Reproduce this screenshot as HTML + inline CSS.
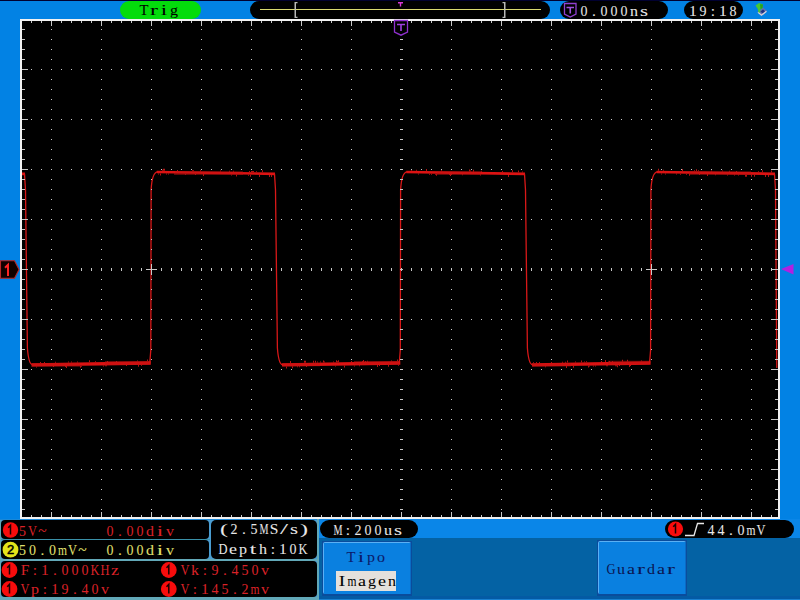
<!DOCTYPE html>
<html><head><meta charset="utf-8"><style>
html,body{margin:0;padding:0;background:#0282e4;}
body{width:800px;height:600px;position:relative;overflow:hidden;}
svg{position:absolute;left:0;top:0;font-family:"Liberation Mono";}
</style></head><body>
<svg width="800" height="600" viewBox="0 0 800 600">
<rect x="0" y="0" width="800" height="600" fill="#0282e4"/>
<rect x="0" y="0" width="800" height="1" fill="#000030"/><rect x="120" y="1" width="81" height="18" rx="9" fill="#04dc0c"/><g fill="#000" stroke="#000" stroke-width="0.05" font-size="15.5" font-family="Liberation Serif" ><text x="139.50" y="15" textLength="9.00" lengthAdjust="spacingAndGlyphs">T</text><text x="150.00" y="15" textLength="8.00" lengthAdjust="spacingAndGlyphs">r</text><text x="160.80" y="15" textLength="6.40" lengthAdjust="spacingAndGlyphs">i</text><text x="170.00" y="15" textLength="8.00" lengthAdjust="spacingAndGlyphs">g</text></g><rect x="250" y="1" width="300" height="18" rx="9" fill="#000"/><rect x="260" y="9" width="281" height="1" fill="#d8d870"/><path d="M294.5 2h3v1.2h-1.5v13.6h1.5v1.2h-3zM505.5 2h-3v1.2h1.5v13.6h-1.5v1.2h3z" fill="#b8b8b8"/><path d="M398 2h5v1.4h-1.8v3h-1.4v-3h-1.8z" fill="#d838d8"/><rect x="560" y="1" width="108" height="18" rx="9" fill="#000"/><path d="M564.5 3.5H576V14L570.25 17L564.5 14Z" stroke="#9040d0" stroke-width="1.3" fill="#000"/><path d="M566.5 7.5H574M570.25 7.5V13.5" stroke="#a050e0" stroke-width="1.6" fill="none"/><g fill="#e8e8e8" stroke="#e8e8e8" stroke-width="0.05" font-size="15.5" font-family="Liberation Serif" ><text x="580.50" y="16" textLength="7.00" lengthAdjust="spacingAndGlyphs">0</text><text x="592.06" y="16">.</text><text x="600.50" y="16" textLength="7.00" lengthAdjust="spacingAndGlyphs">0</text><text x="610.50" y="16" textLength="7.00" lengthAdjust="spacingAndGlyphs">0</text><text x="620.50" y="16" textLength="7.00" lengthAdjust="spacingAndGlyphs">0</text><text x="630.00" y="16" textLength="8.00" lengthAdjust="spacingAndGlyphs">n</text><text x="640.00" y="16" textLength="8.00" lengthAdjust="spacingAndGlyphs">s</text></g><rect x="684" y="1" width="59" height="18" rx="9" fill="#000"/><g fill="#e8e8e8" stroke="#e8e8e8" stroke-width="0.05" font-size="15.5" font-family="Liberation Serif" ><text x="689.12" y="16" textLength="7.75" lengthAdjust="spacingAndGlyphs">1</text><text x="699.50" y="16" textLength="7.00" lengthAdjust="spacingAndGlyphs">9</text><text x="710.85" y="16">:</text><text x="719.12" y="16" textLength="7.75" lengthAdjust="spacingAndGlyphs">1</text><text x="729.50" y="16" textLength="7.00" lengthAdjust="spacingAndGlyphs">8</text></g><path d="M757.5 12L763 7.5L767 11L761.5 15.5Z" fill="#6070b0"/><path d="M758 12.2L761.5 15.2L766.5 11.2" stroke="#d8d0d8" stroke-width="1.4" fill="none"/><path d="M760.5 11.5L763 9.5L765 11.2L762.5 13.2Z" fill="#203080"/><path d="M755.5 5.5L759 3L763 4.5L762.5 8L760.5 9L760 12.5L758.5 12.5L757.8 9Z" fill="#48c830"/><path d="M760 4.2L763 4.5L762.5 8L760.5 9Z" fill="#28a020"/>
<g shape-rendering="crispEdges">
<rect x="20" y="19" width="760" height="500" fill="#f2f2f2"/>
<rect x="22" y="21" width="756" height="496" fill="#000"/>
</g>
<path d="M24.5,173.8 L25.5,190 L27.4,348 Q28.6,364.2 32.5,364.8 M274.5,173.8 L275.5,190 L277.4,348 Q278.6,364.2 282.5,364.8 M524.5,173.8 L525.5,190 L527.4,348 Q528.6,364.2 532.5,364.8 M774.5,173.8 L775.5,190 L776.8,368 M149.8,362.8 L150.8,350 L151.10000000000002,190 Q152.0,172 157.8,171.8 M399.3,362.8 L400.3,350 L400.6,190 Q401.5,172 407.3,171.8 M649.6,362.8 L650.6,350 L650.9,190 Q651.8000000000001,172 657.6,171.8" stroke="#d81818" stroke-width="1.3" fill="none" stroke-linejoin="round"/>
<path d="M22,173.8 L25,173.8 M156.8,172 L275,173.8 M406.3,172 L525,173.8 M656.6,172 L775,173.8" stroke="#dc1212" stroke-width="2.7" fill="none"/>
<path d="M32,364.8 L150.8,363 M282,364.8 L400.3,363 M532,364.8 L650.6,363" stroke="#dc1212" stroke-width="3.3" fill="none"/>
<path d="M175,171.2 H243 V175 H175Z M437,171.2 H481 V175 H437Z M689,171.2 H751 V175 H689Z M31,363 H80 V366.7 H31Z M105,361 H150 V365 H105Z M283,363 H320 V366.3 H283Z M354,361 H399.5 V364.6 H354Z M532,363.5 H571 V366.5 H532Z M608,360.8 H649.5 V364.6 H608Z" fill="#c01010" opacity="0.5"/>
<path d="M158,173.4h1v1h-1zM160,173.4h1v2h-1zM162,169.7h1v1h-1zM163,168.7h1v2h-1zM164,168.7h1v2h-1zM166,173.5h1v1h-1zM168,173.5h1v1h-1zM174,173.6h1v1h-1zM177,169.9h1v1h-1zM185,173.8h1v1h-1zM192,170.2h1v1h-1zM193,170.2h1v1h-1zM195,173.9h1v1h-1zM200,170.3h1v1h-1zM203,174.1h1v2h-1zM220,170.6h1v1h-1zM229,170.8h1v1h-1zM231,174.5h1v1h-1zM233,170.8h1v1h-1zM236,174.6h1v2h-1zM248,174.7h1v1h-1zM249,171.1h1v1h-1zM250,174.8h1v2h-1zM251,171.1h1v1h-1zM252,171.1h1v1h-1zM253,171.1h1v1h-1zM256,171.2h1v1h-1zM259,174.9h1v2h-1zM262,170.3h1v2h-1zM269,175.1h1v2h-1zM271,175.1h1v2h-1zM411,169.7h1v1h-1zM416,169.8h1v1h-1zM418,173.5h1v1h-1zM426,168.9h1v2h-1zM429,173.7h1v1h-1zM431,173.7h1v1h-1zM435,173.8h1v1h-1zM436,173.8h1v2h-1zM441,170.2h1v1h-1zM449,174.0h1v1h-1zM450,174.0h1v2h-1zM451,174.0h1v1h-1zM462,174.2h1v1h-1zM469,169.6h1v2h-1zM470,170.6h1v1h-1zM473,169.7h1v2h-1zM480,174.5h1v1h-1zM481,170.8h1v1h-1zM502,171.1h1v1h-1zM508,174.9h1v2h-1zM512,170.3h1v2h-1zM518,170.4h1v2h-1zM522,171.4h1v1h-1zM658,168.7h1v2h-1zM661,173.4h1v1h-1zM663,169.7h1v1h-1zM665,173.5h1v1h-1zM676,173.6h1v1h-1zM680,173.7h1v1h-1zM682,169.0h1v2h-1zM686,173.8h1v1h-1zM689,173.8h1v2h-1zM694,170.2h1v1h-1zM696,169.2h1v2h-1zM698,170.3h1v1h-1zM699,174.0h1v1h-1zM707,174.1h1v2h-1zM711,170.5h1v1h-1zM715,174.2h1v1h-1zM722,170.6h1v1h-1zM727,174.4h1v1h-1zM729,170.8h1v1h-1zM734,174.5h1v1h-1zM736,170.9h1v1h-1zM738,174.6h1v1h-1zM745,174.7h1v2h-1zM746,174.7h1v2h-1zM751,174.8h1v2h-1zM754,174.8h1v2h-1zM758,171.2h1v1h-1zM762,170.3h1v2h-1zM765,175.0h1v2h-1zM768,175.1h1v2h-1zM771,170.4h1v2h-1zM36,366.4h1v1h-1zM40,362.0h1v1h-1zM44,362.0h1v1h-1zM53,366.1h1v1h-1zM55,361.8h1v1h-1zM65,366.0h1v1h-1zM66,365.9h1v2h-1zM68,361.6h1v1h-1zM71,361.6h1v1h-1zM77,361.5h1v1h-1zM80,365.7h1v2h-1zM81,365.7h1v1h-1zM89,360.3h1v2h-1zM95,361.2h1v1h-1zM103,365.4h1v1h-1zM105,365.3h1v1h-1zM106,365.3h1v1h-1zM107,361.0h1v1h-1zM116,360.9h1v1h-1zM126,365.0h1v1h-1zM137,360.5h1v1h-1zM138,364.8h1v2h-1zM141,364.8h1v1h-1zM147,359.4h1v2h-1zM286,366.4h1v2h-1zM290,361.0h1v2h-1zM292,366.3h1v2h-1zM297,366.2h1v1h-1zM299,366.2h1v1h-1zM304,360.8h1v2h-1zM305,360.8h1v2h-1zM306,366.1h1v1h-1zM313,360.7h1v2h-1zM315,360.7h1v2h-1zM317,361.6h1v1h-1zM320,361.6h1v1h-1zM323,360.5h1v2h-1zM324,361.5h1v1h-1zM333,361.4h1v1h-1zM335,365.6h1v1h-1zM336,360.3h1v2h-1zM337,361.3h1v1h-1zM338,360.3h1v2h-1zM344,365.5h1v2h-1zM351,361.1h1v1h-1zM354,365.4h1v1h-1zM359,365.3h1v1h-1zM362,360.9h1v1h-1zM363,359.9h1v2h-1zM365,360.9h1v1h-1zM367,360.8h1v1h-1zM377,365.0h1v2h-1zM379,365.0h1v1h-1zM388,364.8h1v2h-1zM391,360.5h1v1h-1zM397,359.4h1v2h-1zM398,364.7h1v1h-1zM533,362.2h1v1h-1zM536,362.1h1v1h-1zM539,362.1h1v1h-1zM545,366.3h1v1h-1zM551,361.9h1v1h-1zM562,361.7h1v1h-1zM565,361.7h1v1h-1zM566,365.9h1v2h-1zM567,360.6h1v2h-1zM573,365.8h1v2h-1zM575,361.5h1v1h-1zM581,360.4h1v2h-1zM584,361.4h1v1h-1zM586,361.3h1v1h-1zM588,365.6h1v2h-1zM589,365.6h1v1h-1zM593,365.5h1v1h-1zM595,365.5h1v1h-1zM601,361.1h1v1h-1zM605,360.0h1v2h-1zM606,365.3h1v1h-1zM607,365.3h1v1h-1zM609,361.0h1v1h-1zM612,360.9h1v1h-1zM615,365.2h1v1h-1zM616,365.2h1v1h-1zM617,365.2h1v2h-1zM619,365.1h1v1h-1zM622,359.8h1v2h-1zM627,359.7h1v2h-1zM629,365.0h1v2h-1zM630,365.0h1v1h-1zM641,360.5h1v1h-1z" fill="#b01414"/>
<path d="M51 29h1v1h-1zM51 39h1v1h-1zM51 49h1v1h-1zM51 59h1v1h-1zM51 69h1v1h-1zM51 79h1v1h-1zM51 89h1v1h-1zM51 99h1v1h-1zM51 109h1v1h-1zM51 119h1v1h-1zM51 129h1v1h-1zM51 139h1v1h-1zM51 149h1v1h-1zM51 159h1v1h-1zM51 169h1v1h-1zM51 179h1v1h-1zM51 189h1v1h-1zM51 199h1v1h-1zM51 209h1v1h-1zM51 219h1v1h-1zM51 229h1v1h-1zM51 239h1v1h-1zM51 249h1v1h-1zM51 259h1v1h-1zM51 279h1v1h-1zM51 289h1v1h-1zM51 299h1v1h-1zM51 309h1v1h-1zM51 319h1v1h-1zM51 329h1v1h-1zM51 339h1v1h-1zM51 349h1v1h-1zM51 359h1v1h-1zM51 369h1v1h-1zM51 379h1v1h-1zM51 389h1v1h-1zM51 399h1v1h-1zM51 409h1v1h-1zM51 419h1v1h-1zM51 429h1v1h-1zM51 439h1v1h-1zM51 449h1v1h-1zM51 459h1v1h-1zM51 469h1v1h-1zM51 479h1v1h-1zM51 489h1v1h-1zM51 499h1v1h-1zM51 509h1v1h-1zM101 29h1v1h-1zM101 39h1v1h-1zM101 49h1v1h-1zM101 59h1v1h-1zM101 69h1v1h-1zM101 79h1v1h-1zM101 89h1v1h-1zM101 99h1v1h-1zM101 109h1v1h-1zM101 119h1v1h-1zM101 129h1v1h-1zM101 139h1v1h-1zM101 149h1v1h-1zM101 159h1v1h-1zM101 169h1v1h-1zM101 179h1v1h-1zM101 189h1v1h-1zM101 199h1v1h-1zM101 209h1v1h-1zM101 219h1v1h-1zM101 229h1v1h-1zM101 239h1v1h-1zM101 249h1v1h-1zM101 259h1v1h-1zM101 279h1v1h-1zM101 289h1v1h-1zM101 299h1v1h-1zM101 309h1v1h-1zM101 319h1v1h-1zM101 329h1v1h-1zM101 339h1v1h-1zM101 349h1v1h-1zM101 359h1v1h-1zM101 369h1v1h-1zM101 379h1v1h-1zM101 389h1v1h-1zM101 399h1v1h-1zM101 409h1v1h-1zM101 419h1v1h-1zM101 429h1v1h-1zM101 439h1v1h-1zM101 449h1v1h-1zM101 459h1v1h-1zM101 469h1v1h-1zM101 479h1v1h-1zM101 489h1v1h-1zM101 499h1v1h-1zM101 509h1v1h-1zM151 29h1v1h-1zM151 39h1v1h-1zM151 49h1v1h-1zM151 59h1v1h-1zM151 69h1v1h-1zM151 79h1v1h-1zM151 89h1v1h-1zM151 99h1v1h-1zM151 109h1v1h-1zM151 119h1v1h-1zM151 129h1v1h-1zM151 139h1v1h-1zM151 149h1v1h-1zM151 159h1v1h-1zM151 169h1v1h-1zM151 179h1v1h-1zM151 189h1v1h-1zM151 199h1v1h-1zM151 209h1v1h-1zM151 219h1v1h-1zM151 229h1v1h-1zM151 239h1v1h-1zM151 249h1v1h-1zM151 259h1v1h-1zM151 279h1v1h-1zM151 289h1v1h-1zM151 299h1v1h-1zM151 309h1v1h-1zM151 319h1v1h-1zM151 329h1v1h-1zM151 339h1v1h-1zM151 349h1v1h-1zM151 359h1v1h-1zM151 369h1v1h-1zM151 379h1v1h-1zM151 389h1v1h-1zM151 399h1v1h-1zM151 409h1v1h-1zM151 419h1v1h-1zM151 429h1v1h-1zM151 439h1v1h-1zM151 449h1v1h-1zM151 459h1v1h-1zM151 469h1v1h-1zM151 479h1v1h-1zM151 489h1v1h-1zM151 499h1v1h-1zM151 509h1v1h-1zM201 29h1v1h-1zM201 39h1v1h-1zM201 49h1v1h-1zM201 59h1v1h-1zM201 69h1v1h-1zM201 79h1v1h-1zM201 89h1v1h-1zM201 99h1v1h-1zM201 109h1v1h-1zM201 119h1v1h-1zM201 129h1v1h-1zM201 139h1v1h-1zM201 149h1v1h-1zM201 159h1v1h-1zM201 169h1v1h-1zM201 179h1v1h-1zM201 189h1v1h-1zM201 199h1v1h-1zM201 209h1v1h-1zM201 219h1v1h-1zM201 229h1v1h-1zM201 239h1v1h-1zM201 249h1v1h-1zM201 259h1v1h-1zM201 279h1v1h-1zM201 289h1v1h-1zM201 299h1v1h-1zM201 309h1v1h-1zM201 319h1v1h-1zM201 329h1v1h-1zM201 339h1v1h-1zM201 349h1v1h-1zM201 359h1v1h-1zM201 369h1v1h-1zM201 379h1v1h-1zM201 389h1v1h-1zM201 399h1v1h-1zM201 409h1v1h-1zM201 419h1v1h-1zM201 429h1v1h-1zM201 439h1v1h-1zM201 449h1v1h-1zM201 459h1v1h-1zM201 469h1v1h-1zM201 479h1v1h-1zM201 489h1v1h-1zM201 499h1v1h-1zM201 509h1v1h-1zM251 29h1v1h-1zM251 39h1v1h-1zM251 49h1v1h-1zM251 59h1v1h-1zM251 69h1v1h-1zM251 79h1v1h-1zM251 89h1v1h-1zM251 99h1v1h-1zM251 109h1v1h-1zM251 119h1v1h-1zM251 129h1v1h-1zM251 139h1v1h-1zM251 149h1v1h-1zM251 159h1v1h-1zM251 169h1v1h-1zM251 179h1v1h-1zM251 189h1v1h-1zM251 199h1v1h-1zM251 209h1v1h-1zM251 219h1v1h-1zM251 229h1v1h-1zM251 239h1v1h-1zM251 249h1v1h-1zM251 259h1v1h-1zM251 279h1v1h-1zM251 289h1v1h-1zM251 299h1v1h-1zM251 309h1v1h-1zM251 319h1v1h-1zM251 329h1v1h-1zM251 339h1v1h-1zM251 349h1v1h-1zM251 359h1v1h-1zM251 369h1v1h-1zM251 379h1v1h-1zM251 389h1v1h-1zM251 399h1v1h-1zM251 409h1v1h-1zM251 419h1v1h-1zM251 429h1v1h-1zM251 439h1v1h-1zM251 449h1v1h-1zM251 459h1v1h-1zM251 469h1v1h-1zM251 479h1v1h-1zM251 489h1v1h-1zM251 499h1v1h-1zM251 509h1v1h-1zM301 29h1v1h-1zM301 39h1v1h-1zM301 49h1v1h-1zM301 59h1v1h-1zM301 69h1v1h-1zM301 79h1v1h-1zM301 89h1v1h-1zM301 99h1v1h-1zM301 109h1v1h-1zM301 119h1v1h-1zM301 129h1v1h-1zM301 139h1v1h-1zM301 149h1v1h-1zM301 159h1v1h-1zM301 169h1v1h-1zM301 179h1v1h-1zM301 189h1v1h-1zM301 199h1v1h-1zM301 209h1v1h-1zM301 219h1v1h-1zM301 229h1v1h-1zM301 239h1v1h-1zM301 249h1v1h-1zM301 259h1v1h-1zM301 279h1v1h-1zM301 289h1v1h-1zM301 299h1v1h-1zM301 309h1v1h-1zM301 319h1v1h-1zM301 329h1v1h-1zM301 339h1v1h-1zM301 349h1v1h-1zM301 359h1v1h-1zM301 369h1v1h-1zM301 379h1v1h-1zM301 389h1v1h-1zM301 399h1v1h-1zM301 409h1v1h-1zM301 419h1v1h-1zM301 429h1v1h-1zM301 439h1v1h-1zM301 449h1v1h-1zM301 459h1v1h-1zM301 469h1v1h-1zM301 479h1v1h-1zM301 489h1v1h-1zM301 499h1v1h-1zM301 509h1v1h-1zM351 29h1v1h-1zM351 39h1v1h-1zM351 49h1v1h-1zM351 59h1v1h-1zM351 69h1v1h-1zM351 79h1v1h-1zM351 89h1v1h-1zM351 99h1v1h-1zM351 109h1v1h-1zM351 119h1v1h-1zM351 129h1v1h-1zM351 139h1v1h-1zM351 149h1v1h-1zM351 159h1v1h-1zM351 169h1v1h-1zM351 179h1v1h-1zM351 189h1v1h-1zM351 199h1v1h-1zM351 209h1v1h-1zM351 219h1v1h-1zM351 229h1v1h-1zM351 239h1v1h-1zM351 249h1v1h-1zM351 259h1v1h-1zM351 279h1v1h-1zM351 289h1v1h-1zM351 299h1v1h-1zM351 309h1v1h-1zM351 319h1v1h-1zM351 329h1v1h-1zM351 339h1v1h-1zM351 349h1v1h-1zM351 359h1v1h-1zM351 369h1v1h-1zM351 379h1v1h-1zM351 389h1v1h-1zM351 399h1v1h-1zM351 409h1v1h-1zM351 419h1v1h-1zM351 429h1v1h-1zM351 439h1v1h-1zM351 449h1v1h-1zM351 459h1v1h-1zM351 469h1v1h-1zM351 479h1v1h-1zM351 489h1v1h-1zM351 499h1v1h-1zM351 509h1v1h-1zM451 29h1v1h-1zM451 39h1v1h-1zM451 49h1v1h-1zM451 59h1v1h-1zM451 69h1v1h-1zM451 79h1v1h-1zM451 89h1v1h-1zM451 99h1v1h-1zM451 109h1v1h-1zM451 119h1v1h-1zM451 129h1v1h-1zM451 139h1v1h-1zM451 149h1v1h-1zM451 159h1v1h-1zM451 169h1v1h-1zM451 179h1v1h-1zM451 189h1v1h-1zM451 199h1v1h-1zM451 209h1v1h-1zM451 219h1v1h-1zM451 229h1v1h-1zM451 239h1v1h-1zM451 249h1v1h-1zM451 259h1v1h-1zM451 279h1v1h-1zM451 289h1v1h-1zM451 299h1v1h-1zM451 309h1v1h-1zM451 319h1v1h-1zM451 329h1v1h-1zM451 339h1v1h-1zM451 349h1v1h-1zM451 359h1v1h-1zM451 369h1v1h-1zM451 379h1v1h-1zM451 389h1v1h-1zM451 399h1v1h-1zM451 409h1v1h-1zM451 419h1v1h-1zM451 429h1v1h-1zM451 439h1v1h-1zM451 449h1v1h-1zM451 459h1v1h-1zM451 469h1v1h-1zM451 479h1v1h-1zM451 489h1v1h-1zM451 499h1v1h-1zM451 509h1v1h-1zM501 29h1v1h-1zM501 39h1v1h-1zM501 49h1v1h-1zM501 59h1v1h-1zM501 69h1v1h-1zM501 79h1v1h-1zM501 89h1v1h-1zM501 99h1v1h-1zM501 109h1v1h-1zM501 119h1v1h-1zM501 129h1v1h-1zM501 139h1v1h-1zM501 149h1v1h-1zM501 159h1v1h-1zM501 169h1v1h-1zM501 179h1v1h-1zM501 189h1v1h-1zM501 199h1v1h-1zM501 209h1v1h-1zM501 219h1v1h-1zM501 229h1v1h-1zM501 239h1v1h-1zM501 249h1v1h-1zM501 259h1v1h-1zM501 279h1v1h-1zM501 289h1v1h-1zM501 299h1v1h-1zM501 309h1v1h-1zM501 319h1v1h-1zM501 329h1v1h-1zM501 339h1v1h-1zM501 349h1v1h-1zM501 359h1v1h-1zM501 369h1v1h-1zM501 379h1v1h-1zM501 389h1v1h-1zM501 399h1v1h-1zM501 409h1v1h-1zM501 419h1v1h-1zM501 429h1v1h-1zM501 439h1v1h-1zM501 449h1v1h-1zM501 459h1v1h-1zM501 469h1v1h-1zM501 479h1v1h-1zM501 489h1v1h-1zM501 499h1v1h-1zM501 509h1v1h-1zM551 29h1v1h-1zM551 39h1v1h-1zM551 49h1v1h-1zM551 59h1v1h-1zM551 69h1v1h-1zM551 79h1v1h-1zM551 89h1v1h-1zM551 99h1v1h-1zM551 109h1v1h-1zM551 119h1v1h-1zM551 129h1v1h-1zM551 139h1v1h-1zM551 149h1v1h-1zM551 159h1v1h-1zM551 169h1v1h-1zM551 179h1v1h-1zM551 189h1v1h-1zM551 199h1v1h-1zM551 209h1v1h-1zM551 219h1v1h-1zM551 229h1v1h-1zM551 239h1v1h-1zM551 249h1v1h-1zM551 259h1v1h-1zM551 279h1v1h-1zM551 289h1v1h-1zM551 299h1v1h-1zM551 309h1v1h-1zM551 319h1v1h-1zM551 329h1v1h-1zM551 339h1v1h-1zM551 349h1v1h-1zM551 359h1v1h-1zM551 369h1v1h-1zM551 379h1v1h-1zM551 389h1v1h-1zM551 399h1v1h-1zM551 409h1v1h-1zM551 419h1v1h-1zM551 429h1v1h-1zM551 439h1v1h-1zM551 449h1v1h-1zM551 459h1v1h-1zM551 469h1v1h-1zM551 479h1v1h-1zM551 489h1v1h-1zM551 499h1v1h-1zM551 509h1v1h-1zM601 29h1v1h-1zM601 39h1v1h-1zM601 49h1v1h-1zM601 59h1v1h-1zM601 69h1v1h-1zM601 79h1v1h-1zM601 89h1v1h-1zM601 99h1v1h-1zM601 109h1v1h-1zM601 119h1v1h-1zM601 129h1v1h-1zM601 139h1v1h-1zM601 149h1v1h-1zM601 159h1v1h-1zM601 169h1v1h-1zM601 179h1v1h-1zM601 189h1v1h-1zM601 199h1v1h-1zM601 209h1v1h-1zM601 219h1v1h-1zM601 229h1v1h-1zM601 239h1v1h-1zM601 249h1v1h-1zM601 259h1v1h-1zM601 279h1v1h-1zM601 289h1v1h-1zM601 299h1v1h-1zM601 309h1v1h-1zM601 319h1v1h-1zM601 329h1v1h-1zM601 339h1v1h-1zM601 349h1v1h-1zM601 359h1v1h-1zM601 369h1v1h-1zM601 379h1v1h-1zM601 389h1v1h-1zM601 399h1v1h-1zM601 409h1v1h-1zM601 419h1v1h-1zM601 429h1v1h-1zM601 439h1v1h-1zM601 449h1v1h-1zM601 459h1v1h-1zM601 469h1v1h-1zM601 479h1v1h-1zM601 489h1v1h-1zM601 499h1v1h-1zM601 509h1v1h-1zM651 29h1v1h-1zM651 39h1v1h-1zM651 49h1v1h-1zM651 59h1v1h-1zM651 69h1v1h-1zM651 79h1v1h-1zM651 89h1v1h-1zM651 99h1v1h-1zM651 109h1v1h-1zM651 119h1v1h-1zM651 129h1v1h-1zM651 139h1v1h-1zM651 149h1v1h-1zM651 159h1v1h-1zM651 169h1v1h-1zM651 179h1v1h-1zM651 189h1v1h-1zM651 199h1v1h-1zM651 209h1v1h-1zM651 219h1v1h-1zM651 229h1v1h-1zM651 239h1v1h-1zM651 249h1v1h-1zM651 259h1v1h-1zM651 279h1v1h-1zM651 289h1v1h-1zM651 299h1v1h-1zM651 309h1v1h-1zM651 319h1v1h-1zM651 329h1v1h-1zM651 339h1v1h-1zM651 349h1v1h-1zM651 359h1v1h-1zM651 369h1v1h-1zM651 379h1v1h-1zM651 389h1v1h-1zM651 399h1v1h-1zM651 409h1v1h-1zM651 419h1v1h-1zM651 429h1v1h-1zM651 439h1v1h-1zM651 449h1v1h-1zM651 459h1v1h-1zM651 469h1v1h-1zM651 479h1v1h-1zM651 489h1v1h-1zM651 499h1v1h-1zM651 509h1v1h-1zM701 29h1v1h-1zM701 39h1v1h-1zM701 49h1v1h-1zM701 59h1v1h-1zM701 69h1v1h-1zM701 79h1v1h-1zM701 89h1v1h-1zM701 99h1v1h-1zM701 109h1v1h-1zM701 119h1v1h-1zM701 129h1v1h-1zM701 139h1v1h-1zM701 149h1v1h-1zM701 159h1v1h-1zM701 169h1v1h-1zM701 179h1v1h-1zM701 189h1v1h-1zM701 199h1v1h-1zM701 209h1v1h-1zM701 219h1v1h-1zM701 229h1v1h-1zM701 239h1v1h-1zM701 249h1v1h-1zM701 259h1v1h-1zM701 279h1v1h-1zM701 289h1v1h-1zM701 299h1v1h-1zM701 309h1v1h-1zM701 319h1v1h-1zM701 329h1v1h-1zM701 339h1v1h-1zM701 349h1v1h-1zM701 359h1v1h-1zM701 369h1v1h-1zM701 379h1v1h-1zM701 389h1v1h-1zM701 399h1v1h-1zM701 409h1v1h-1zM701 419h1v1h-1zM701 429h1v1h-1zM701 439h1v1h-1zM701 449h1v1h-1zM701 459h1v1h-1zM701 469h1v1h-1zM701 479h1v1h-1zM701 489h1v1h-1zM701 499h1v1h-1zM701 509h1v1h-1zM751 29h1v1h-1zM751 39h1v1h-1zM751 49h1v1h-1zM751 59h1v1h-1zM751 69h1v1h-1zM751 79h1v1h-1zM751 89h1v1h-1zM751 99h1v1h-1zM751 109h1v1h-1zM751 119h1v1h-1zM751 129h1v1h-1zM751 139h1v1h-1zM751 149h1v1h-1zM751 159h1v1h-1zM751 169h1v1h-1zM751 179h1v1h-1zM751 189h1v1h-1zM751 199h1v1h-1zM751 209h1v1h-1zM751 219h1v1h-1zM751 229h1v1h-1zM751 239h1v1h-1zM751 249h1v1h-1zM751 259h1v1h-1zM751 279h1v1h-1zM751 289h1v1h-1zM751 299h1v1h-1zM751 309h1v1h-1zM751 319h1v1h-1zM751 329h1v1h-1zM751 339h1v1h-1zM751 349h1v1h-1zM751 359h1v1h-1zM751 369h1v1h-1zM751 379h1v1h-1zM751 389h1v1h-1zM751 399h1v1h-1zM751 409h1v1h-1zM751 419h1v1h-1zM751 429h1v1h-1zM751 439h1v1h-1zM751 449h1v1h-1zM751 459h1v1h-1zM751 469h1v1h-1zM751 479h1v1h-1zM751 489h1v1h-1zM751 499h1v1h-1zM751 509h1v1h-1zM31 69h1v1h-1zM41 69h1v1h-1zM51 69h1v1h-1zM61 69h1v1h-1zM71 69h1v1h-1zM81 69h1v1h-1zM91 69h1v1h-1zM101 69h1v1h-1zM111 69h1v1h-1zM121 69h1v1h-1zM131 69h1v1h-1zM141 69h1v1h-1zM151 69h1v1h-1zM161 69h1v1h-1zM171 69h1v1h-1zM181 69h1v1h-1zM191 69h1v1h-1zM201 69h1v1h-1zM211 69h1v1h-1zM221 69h1v1h-1zM231 69h1v1h-1zM241 69h1v1h-1zM251 69h1v1h-1zM261 69h1v1h-1zM271 69h1v1h-1zM281 69h1v1h-1zM291 69h1v1h-1zM301 69h1v1h-1zM311 69h1v1h-1zM321 69h1v1h-1zM331 69h1v1h-1zM341 69h1v1h-1zM351 69h1v1h-1zM361 69h1v1h-1zM371 69h1v1h-1zM381 69h1v1h-1zM391 69h1v1h-1zM411 69h1v1h-1zM421 69h1v1h-1zM431 69h1v1h-1zM441 69h1v1h-1zM451 69h1v1h-1zM461 69h1v1h-1zM471 69h1v1h-1zM481 69h1v1h-1zM491 69h1v1h-1zM501 69h1v1h-1zM511 69h1v1h-1zM521 69h1v1h-1zM531 69h1v1h-1zM541 69h1v1h-1zM551 69h1v1h-1zM561 69h1v1h-1zM571 69h1v1h-1zM581 69h1v1h-1zM591 69h1v1h-1zM601 69h1v1h-1zM611 69h1v1h-1zM621 69h1v1h-1zM631 69h1v1h-1zM641 69h1v1h-1zM651 69h1v1h-1zM661 69h1v1h-1zM671 69h1v1h-1zM681 69h1v1h-1zM691 69h1v1h-1zM701 69h1v1h-1zM711 69h1v1h-1zM721 69h1v1h-1zM731 69h1v1h-1zM741 69h1v1h-1zM751 69h1v1h-1zM761 69h1v1h-1zM771 69h1v1h-1zM31 119h1v1h-1zM41 119h1v1h-1zM51 119h1v1h-1zM61 119h1v1h-1zM71 119h1v1h-1zM81 119h1v1h-1zM91 119h1v1h-1zM101 119h1v1h-1zM111 119h1v1h-1zM121 119h1v1h-1zM131 119h1v1h-1zM141 119h1v1h-1zM151 119h1v1h-1zM161 119h1v1h-1zM171 119h1v1h-1zM181 119h1v1h-1zM191 119h1v1h-1zM201 119h1v1h-1zM211 119h1v1h-1zM221 119h1v1h-1zM231 119h1v1h-1zM241 119h1v1h-1zM251 119h1v1h-1zM261 119h1v1h-1zM271 119h1v1h-1zM281 119h1v1h-1zM291 119h1v1h-1zM301 119h1v1h-1zM311 119h1v1h-1zM321 119h1v1h-1zM331 119h1v1h-1zM341 119h1v1h-1zM351 119h1v1h-1zM361 119h1v1h-1zM371 119h1v1h-1zM381 119h1v1h-1zM391 119h1v1h-1zM411 119h1v1h-1zM421 119h1v1h-1zM431 119h1v1h-1zM441 119h1v1h-1zM451 119h1v1h-1zM461 119h1v1h-1zM471 119h1v1h-1zM481 119h1v1h-1zM491 119h1v1h-1zM501 119h1v1h-1zM511 119h1v1h-1zM521 119h1v1h-1zM531 119h1v1h-1zM541 119h1v1h-1zM551 119h1v1h-1zM561 119h1v1h-1zM571 119h1v1h-1zM581 119h1v1h-1zM591 119h1v1h-1zM601 119h1v1h-1zM611 119h1v1h-1zM621 119h1v1h-1zM631 119h1v1h-1zM641 119h1v1h-1zM651 119h1v1h-1zM661 119h1v1h-1zM671 119h1v1h-1zM681 119h1v1h-1zM691 119h1v1h-1zM701 119h1v1h-1zM711 119h1v1h-1zM721 119h1v1h-1zM731 119h1v1h-1zM741 119h1v1h-1zM751 119h1v1h-1zM761 119h1v1h-1zM771 119h1v1h-1zM31 169h1v1h-1zM41 169h1v1h-1zM51 169h1v1h-1zM61 169h1v1h-1zM71 169h1v1h-1zM81 169h1v1h-1zM91 169h1v1h-1zM101 169h1v1h-1zM111 169h1v1h-1zM121 169h1v1h-1zM131 169h1v1h-1zM141 169h1v1h-1zM151 169h1v1h-1zM161 169h1v1h-1zM171 169h1v1h-1zM181 169h1v1h-1zM191 169h1v1h-1zM201 169h1v1h-1zM211 169h1v1h-1zM221 169h1v1h-1zM231 169h1v1h-1zM241 169h1v1h-1zM251 169h1v1h-1zM261 169h1v1h-1zM271 169h1v1h-1zM281 169h1v1h-1zM291 169h1v1h-1zM301 169h1v1h-1zM311 169h1v1h-1zM321 169h1v1h-1zM331 169h1v1h-1zM341 169h1v1h-1zM351 169h1v1h-1zM361 169h1v1h-1zM371 169h1v1h-1zM381 169h1v1h-1zM391 169h1v1h-1zM411 169h1v1h-1zM421 169h1v1h-1zM431 169h1v1h-1zM441 169h1v1h-1zM451 169h1v1h-1zM461 169h1v1h-1zM471 169h1v1h-1zM481 169h1v1h-1zM491 169h1v1h-1zM501 169h1v1h-1zM511 169h1v1h-1zM521 169h1v1h-1zM531 169h1v1h-1zM541 169h1v1h-1zM551 169h1v1h-1zM561 169h1v1h-1zM571 169h1v1h-1zM581 169h1v1h-1zM591 169h1v1h-1zM601 169h1v1h-1zM611 169h1v1h-1zM621 169h1v1h-1zM631 169h1v1h-1zM641 169h1v1h-1zM651 169h1v1h-1zM661 169h1v1h-1zM671 169h1v1h-1zM681 169h1v1h-1zM691 169h1v1h-1zM701 169h1v1h-1zM711 169h1v1h-1zM721 169h1v1h-1zM731 169h1v1h-1zM741 169h1v1h-1zM751 169h1v1h-1zM761 169h1v1h-1zM771 169h1v1h-1zM31 219h1v1h-1zM41 219h1v1h-1zM51 219h1v1h-1zM61 219h1v1h-1zM71 219h1v1h-1zM81 219h1v1h-1zM91 219h1v1h-1zM101 219h1v1h-1zM111 219h1v1h-1zM121 219h1v1h-1zM131 219h1v1h-1zM141 219h1v1h-1zM151 219h1v1h-1zM161 219h1v1h-1zM171 219h1v1h-1zM181 219h1v1h-1zM191 219h1v1h-1zM201 219h1v1h-1zM211 219h1v1h-1zM221 219h1v1h-1zM231 219h1v1h-1zM241 219h1v1h-1zM251 219h1v1h-1zM261 219h1v1h-1zM271 219h1v1h-1zM281 219h1v1h-1zM291 219h1v1h-1zM301 219h1v1h-1zM311 219h1v1h-1zM321 219h1v1h-1zM331 219h1v1h-1zM341 219h1v1h-1zM351 219h1v1h-1zM361 219h1v1h-1zM371 219h1v1h-1zM381 219h1v1h-1zM391 219h1v1h-1zM411 219h1v1h-1zM421 219h1v1h-1zM431 219h1v1h-1zM441 219h1v1h-1zM451 219h1v1h-1zM461 219h1v1h-1zM471 219h1v1h-1zM481 219h1v1h-1zM491 219h1v1h-1zM501 219h1v1h-1zM511 219h1v1h-1zM521 219h1v1h-1zM531 219h1v1h-1zM541 219h1v1h-1zM551 219h1v1h-1zM561 219h1v1h-1zM571 219h1v1h-1zM581 219h1v1h-1zM591 219h1v1h-1zM601 219h1v1h-1zM611 219h1v1h-1zM621 219h1v1h-1zM631 219h1v1h-1zM641 219h1v1h-1zM651 219h1v1h-1zM661 219h1v1h-1zM671 219h1v1h-1zM681 219h1v1h-1zM691 219h1v1h-1zM701 219h1v1h-1zM711 219h1v1h-1zM721 219h1v1h-1zM731 219h1v1h-1zM741 219h1v1h-1zM751 219h1v1h-1zM761 219h1v1h-1zM771 219h1v1h-1zM31 319h1v1h-1zM41 319h1v1h-1zM51 319h1v1h-1zM61 319h1v1h-1zM71 319h1v1h-1zM81 319h1v1h-1zM91 319h1v1h-1zM101 319h1v1h-1zM111 319h1v1h-1zM121 319h1v1h-1zM131 319h1v1h-1zM141 319h1v1h-1zM151 319h1v1h-1zM161 319h1v1h-1zM171 319h1v1h-1zM181 319h1v1h-1zM191 319h1v1h-1zM201 319h1v1h-1zM211 319h1v1h-1zM221 319h1v1h-1zM231 319h1v1h-1zM241 319h1v1h-1zM251 319h1v1h-1zM261 319h1v1h-1zM271 319h1v1h-1zM281 319h1v1h-1zM291 319h1v1h-1zM301 319h1v1h-1zM311 319h1v1h-1zM321 319h1v1h-1zM331 319h1v1h-1zM341 319h1v1h-1zM351 319h1v1h-1zM361 319h1v1h-1zM371 319h1v1h-1zM381 319h1v1h-1zM391 319h1v1h-1zM411 319h1v1h-1zM421 319h1v1h-1zM431 319h1v1h-1zM441 319h1v1h-1zM451 319h1v1h-1zM461 319h1v1h-1zM471 319h1v1h-1zM481 319h1v1h-1zM491 319h1v1h-1zM501 319h1v1h-1zM511 319h1v1h-1zM521 319h1v1h-1zM531 319h1v1h-1zM541 319h1v1h-1zM551 319h1v1h-1zM561 319h1v1h-1zM571 319h1v1h-1zM581 319h1v1h-1zM591 319h1v1h-1zM601 319h1v1h-1zM611 319h1v1h-1zM621 319h1v1h-1zM631 319h1v1h-1zM641 319h1v1h-1zM651 319h1v1h-1zM661 319h1v1h-1zM671 319h1v1h-1zM681 319h1v1h-1zM691 319h1v1h-1zM701 319h1v1h-1zM711 319h1v1h-1zM721 319h1v1h-1zM731 319h1v1h-1zM741 319h1v1h-1zM751 319h1v1h-1zM761 319h1v1h-1zM771 319h1v1h-1zM31 369h1v1h-1zM41 369h1v1h-1zM51 369h1v1h-1zM61 369h1v1h-1zM71 369h1v1h-1zM81 369h1v1h-1zM91 369h1v1h-1zM101 369h1v1h-1zM111 369h1v1h-1zM121 369h1v1h-1zM131 369h1v1h-1zM141 369h1v1h-1zM151 369h1v1h-1zM161 369h1v1h-1zM171 369h1v1h-1zM181 369h1v1h-1zM191 369h1v1h-1zM201 369h1v1h-1zM211 369h1v1h-1zM221 369h1v1h-1zM231 369h1v1h-1zM241 369h1v1h-1zM251 369h1v1h-1zM261 369h1v1h-1zM271 369h1v1h-1zM281 369h1v1h-1zM291 369h1v1h-1zM301 369h1v1h-1zM311 369h1v1h-1zM321 369h1v1h-1zM331 369h1v1h-1zM341 369h1v1h-1zM351 369h1v1h-1zM361 369h1v1h-1zM371 369h1v1h-1zM381 369h1v1h-1zM391 369h1v1h-1zM411 369h1v1h-1zM421 369h1v1h-1zM431 369h1v1h-1zM441 369h1v1h-1zM451 369h1v1h-1zM461 369h1v1h-1zM471 369h1v1h-1zM481 369h1v1h-1zM491 369h1v1h-1zM501 369h1v1h-1zM511 369h1v1h-1zM521 369h1v1h-1zM531 369h1v1h-1zM541 369h1v1h-1zM551 369h1v1h-1zM561 369h1v1h-1zM571 369h1v1h-1zM581 369h1v1h-1zM591 369h1v1h-1zM601 369h1v1h-1zM611 369h1v1h-1zM621 369h1v1h-1zM631 369h1v1h-1zM641 369h1v1h-1zM651 369h1v1h-1zM661 369h1v1h-1zM671 369h1v1h-1zM681 369h1v1h-1zM691 369h1v1h-1zM701 369h1v1h-1zM711 369h1v1h-1zM721 369h1v1h-1zM731 369h1v1h-1zM741 369h1v1h-1zM751 369h1v1h-1zM761 369h1v1h-1zM771 369h1v1h-1zM31 419h1v1h-1zM41 419h1v1h-1zM51 419h1v1h-1zM61 419h1v1h-1zM71 419h1v1h-1zM81 419h1v1h-1zM91 419h1v1h-1zM101 419h1v1h-1zM111 419h1v1h-1zM121 419h1v1h-1zM131 419h1v1h-1zM141 419h1v1h-1zM151 419h1v1h-1zM161 419h1v1h-1zM171 419h1v1h-1zM181 419h1v1h-1zM191 419h1v1h-1zM201 419h1v1h-1zM211 419h1v1h-1zM221 419h1v1h-1zM231 419h1v1h-1zM241 419h1v1h-1zM251 419h1v1h-1zM261 419h1v1h-1zM271 419h1v1h-1zM281 419h1v1h-1zM291 419h1v1h-1zM301 419h1v1h-1zM311 419h1v1h-1zM321 419h1v1h-1zM331 419h1v1h-1zM341 419h1v1h-1zM351 419h1v1h-1zM361 419h1v1h-1zM371 419h1v1h-1zM381 419h1v1h-1zM391 419h1v1h-1zM411 419h1v1h-1zM421 419h1v1h-1zM431 419h1v1h-1zM441 419h1v1h-1zM451 419h1v1h-1zM461 419h1v1h-1zM471 419h1v1h-1zM481 419h1v1h-1zM491 419h1v1h-1zM501 419h1v1h-1zM511 419h1v1h-1zM521 419h1v1h-1zM531 419h1v1h-1zM541 419h1v1h-1zM551 419h1v1h-1zM561 419h1v1h-1zM571 419h1v1h-1zM581 419h1v1h-1zM591 419h1v1h-1zM601 419h1v1h-1zM611 419h1v1h-1zM621 419h1v1h-1zM631 419h1v1h-1zM641 419h1v1h-1zM651 419h1v1h-1zM661 419h1v1h-1zM671 419h1v1h-1zM681 419h1v1h-1zM691 419h1v1h-1zM701 419h1v1h-1zM711 419h1v1h-1zM721 419h1v1h-1zM731 419h1v1h-1zM741 419h1v1h-1zM751 419h1v1h-1zM761 419h1v1h-1zM771 419h1v1h-1zM31 469h1v1h-1zM41 469h1v1h-1zM51 469h1v1h-1zM61 469h1v1h-1zM71 469h1v1h-1zM81 469h1v1h-1zM91 469h1v1h-1zM101 469h1v1h-1zM111 469h1v1h-1zM121 469h1v1h-1zM131 469h1v1h-1zM141 469h1v1h-1zM151 469h1v1h-1zM161 469h1v1h-1zM171 469h1v1h-1zM181 469h1v1h-1zM191 469h1v1h-1zM201 469h1v1h-1zM211 469h1v1h-1zM221 469h1v1h-1zM231 469h1v1h-1zM241 469h1v1h-1zM251 469h1v1h-1zM261 469h1v1h-1zM271 469h1v1h-1zM281 469h1v1h-1zM291 469h1v1h-1zM301 469h1v1h-1zM311 469h1v1h-1zM321 469h1v1h-1zM331 469h1v1h-1zM341 469h1v1h-1zM351 469h1v1h-1zM361 469h1v1h-1zM371 469h1v1h-1zM381 469h1v1h-1zM391 469h1v1h-1zM411 469h1v1h-1zM421 469h1v1h-1zM431 469h1v1h-1zM441 469h1v1h-1zM451 469h1v1h-1zM461 469h1v1h-1zM471 469h1v1h-1zM481 469h1v1h-1zM491 469h1v1h-1zM501 469h1v1h-1zM511 469h1v1h-1zM521 469h1v1h-1zM531 469h1v1h-1zM541 469h1v1h-1zM551 469h1v1h-1zM561 469h1v1h-1zM571 469h1v1h-1zM581 469h1v1h-1zM591 469h1v1h-1zM601 469h1v1h-1zM611 469h1v1h-1zM621 469h1v1h-1zM631 469h1v1h-1zM641 469h1v1h-1zM651 469h1v1h-1zM661 469h1v1h-1zM671 469h1v1h-1zM681 469h1v1h-1zM691 469h1v1h-1zM701 469h1v1h-1zM711 469h1v1h-1zM721 469h1v1h-1zM731 469h1v1h-1zM741 469h1v1h-1zM751 469h1v1h-1zM761 469h1v1h-1zM771 469h1v1h-1zM31 268h1v3h-1zM41 268h1v3h-1zM51 268h1v3h-1zM61 268h1v3h-1zM71 268h1v3h-1zM81 268h1v3h-1zM91 268h1v3h-1zM101 268h1v3h-1zM111 268h1v3h-1zM121 268h1v3h-1zM131 268h1v3h-1zM141 268h1v3h-1zM151 268h1v3h-1zM161 268h1v3h-1zM171 268h1v3h-1zM181 268h1v3h-1zM191 268h1v3h-1zM201 268h1v3h-1zM211 268h1v3h-1zM221 268h1v3h-1zM231 268h1v3h-1zM241 268h1v3h-1zM251 268h1v3h-1zM261 268h1v3h-1zM271 268h1v3h-1zM281 268h1v3h-1zM291 268h1v3h-1zM301 268h1v3h-1zM311 268h1v3h-1zM321 268h1v3h-1zM331 268h1v3h-1zM341 268h1v3h-1zM351 268h1v3h-1zM361 268h1v3h-1zM371 268h1v3h-1zM381 268h1v3h-1zM391 268h1v3h-1zM401 268h1v3h-1zM411 268h1v3h-1zM421 268h1v3h-1zM431 268h1v3h-1zM441 268h1v3h-1zM451 268h1v3h-1zM461 268h1v3h-1zM471 268h1v3h-1zM481 268h1v3h-1zM491 268h1v3h-1zM501 268h1v3h-1zM511 268h1v3h-1zM521 268h1v3h-1zM531 268h1v3h-1zM541 268h1v3h-1zM551 268h1v3h-1zM561 268h1v3h-1zM571 268h1v3h-1zM581 268h1v3h-1zM591 268h1v3h-1zM601 268h1v3h-1zM611 268h1v3h-1zM621 268h1v3h-1zM631 268h1v3h-1zM641 268h1v3h-1zM651 268h1v3h-1zM661 268h1v3h-1zM671 268h1v3h-1zM681 268h1v3h-1zM691 268h1v3h-1zM701 268h1v3h-1zM711 268h1v3h-1zM721 268h1v3h-1zM731 268h1v3h-1zM741 268h1v3h-1zM751 268h1v3h-1zM761 268h1v3h-1zM771 268h1v3h-1zM400 29h3v1h-3zM400 39h3v1h-3zM400 49h3v1h-3zM400 59h3v1h-3zM400 69h3v1h-3zM400 79h3v1h-3zM400 89h3v1h-3zM400 99h3v1h-3zM400 109h3v1h-3zM400 119h3v1h-3zM400 129h3v1h-3zM400 139h3v1h-3zM400 149h3v1h-3zM400 159h3v1h-3zM400 169h3v1h-3zM400 179h3v1h-3zM400 189h3v1h-3zM400 199h3v1h-3zM400 209h3v1h-3zM400 219h3v1h-3zM400 229h3v1h-3zM400 239h3v1h-3zM400 249h3v1h-3zM400 259h3v1h-3zM400 269h3v1h-3zM400 279h3v1h-3zM400 289h3v1h-3zM400 299h3v1h-3zM400 309h3v1h-3zM400 319h3v1h-3zM400 329h3v1h-3zM400 339h3v1h-3zM400 349h3v1h-3zM400 359h3v1h-3zM400 369h3v1h-3zM400 379h3v1h-3zM400 389h3v1h-3zM400 399h3v1h-3zM400 409h3v1h-3zM400 419h3v1h-3zM400 429h3v1h-3zM400 439h3v1h-3zM400 449h3v1h-3zM400 459h3v1h-3zM400 469h3v1h-3zM400 479h3v1h-3zM400 489h3v1h-3zM400 499h3v1h-3zM400 509h3v1h-3zM31 21h1v2h-1zM31 515h1v2h-1zM41 21h1v2h-1zM41 515h1v2h-1zM51 21h1v5h-1zM51 512h1v5h-1zM61 21h1v2h-1zM61 515h1v2h-1zM71 21h1v2h-1zM71 515h1v2h-1zM81 21h1v2h-1zM81 515h1v2h-1zM91 21h1v2h-1zM91 515h1v2h-1zM101 21h1v5h-1zM101 512h1v5h-1zM111 21h1v2h-1zM111 515h1v2h-1zM121 21h1v2h-1zM121 515h1v2h-1zM131 21h1v2h-1zM131 515h1v2h-1zM141 21h1v2h-1zM141 515h1v2h-1zM151 21h1v5h-1zM151 512h1v5h-1zM161 21h1v2h-1zM161 515h1v2h-1zM171 21h1v2h-1zM171 515h1v2h-1zM181 21h1v2h-1zM181 515h1v2h-1zM191 21h1v2h-1zM191 515h1v2h-1zM201 21h1v5h-1zM201 512h1v5h-1zM211 21h1v2h-1zM211 515h1v2h-1zM221 21h1v2h-1zM221 515h1v2h-1zM231 21h1v2h-1zM231 515h1v2h-1zM241 21h1v2h-1zM241 515h1v2h-1zM251 21h1v5h-1zM251 512h1v5h-1zM261 21h1v2h-1zM261 515h1v2h-1zM271 21h1v2h-1zM271 515h1v2h-1zM281 21h1v2h-1zM281 515h1v2h-1zM291 21h1v2h-1zM291 515h1v2h-1zM301 21h1v5h-1zM301 512h1v5h-1zM311 21h1v2h-1zM311 515h1v2h-1zM321 21h1v2h-1zM321 515h1v2h-1zM331 21h1v2h-1zM331 515h1v2h-1zM341 21h1v2h-1zM341 515h1v2h-1zM351 21h1v5h-1zM351 512h1v5h-1zM361 21h1v2h-1zM361 515h1v2h-1zM371 21h1v2h-1zM371 515h1v2h-1zM381 21h1v2h-1zM381 515h1v2h-1zM391 21h1v2h-1zM391 515h1v2h-1zM401 21h1v5h-1zM401 512h1v5h-1zM411 21h1v2h-1zM411 515h1v2h-1zM421 21h1v2h-1zM421 515h1v2h-1zM431 21h1v2h-1zM431 515h1v2h-1zM441 21h1v2h-1zM441 515h1v2h-1zM451 21h1v5h-1zM451 512h1v5h-1zM461 21h1v2h-1zM461 515h1v2h-1zM471 21h1v2h-1zM471 515h1v2h-1zM481 21h1v2h-1zM481 515h1v2h-1zM491 21h1v2h-1zM491 515h1v2h-1zM501 21h1v5h-1zM501 512h1v5h-1zM511 21h1v2h-1zM511 515h1v2h-1zM521 21h1v2h-1zM521 515h1v2h-1zM531 21h1v2h-1zM531 515h1v2h-1zM541 21h1v2h-1zM541 515h1v2h-1zM551 21h1v5h-1zM551 512h1v5h-1zM561 21h1v2h-1zM561 515h1v2h-1zM571 21h1v2h-1zM571 515h1v2h-1zM581 21h1v2h-1zM581 515h1v2h-1zM591 21h1v2h-1zM591 515h1v2h-1zM601 21h1v5h-1zM601 512h1v5h-1zM611 21h1v2h-1zM611 515h1v2h-1zM621 21h1v2h-1zM621 515h1v2h-1zM631 21h1v2h-1zM631 515h1v2h-1zM641 21h1v2h-1zM641 515h1v2h-1zM651 21h1v5h-1zM651 512h1v5h-1zM661 21h1v2h-1zM661 515h1v2h-1zM671 21h1v2h-1zM671 515h1v2h-1zM681 21h1v2h-1zM681 515h1v2h-1zM691 21h1v2h-1zM691 515h1v2h-1zM701 21h1v5h-1zM701 512h1v5h-1zM711 21h1v2h-1zM711 515h1v2h-1zM721 21h1v2h-1zM721 515h1v2h-1zM731 21h1v2h-1zM731 515h1v2h-1zM741 21h1v2h-1zM741 515h1v2h-1zM751 21h1v5h-1zM751 512h1v5h-1zM761 21h1v2h-1zM761 515h1v2h-1zM771 21h1v2h-1zM771 515h1v2h-1zM22 29h3v1h-3zM775 29h3v1h-3zM22 39h3v1h-3zM775 39h3v1h-3zM22 49h3v1h-3zM775 49h3v1h-3zM22 59h3v1h-3zM775 59h3v1h-3zM22 69h6v1h-6zM772 69h6v1h-6zM22 79h3v1h-3zM775 79h3v1h-3zM22 89h3v1h-3zM775 89h3v1h-3zM22 99h3v1h-3zM775 99h3v1h-3zM22 109h3v1h-3zM775 109h3v1h-3zM22 119h6v1h-6zM772 119h6v1h-6zM22 129h3v1h-3zM775 129h3v1h-3zM22 139h3v1h-3zM775 139h3v1h-3zM22 149h3v1h-3zM775 149h3v1h-3zM22 159h3v1h-3zM775 159h3v1h-3zM22 169h6v1h-6zM772 169h6v1h-6zM22 179h3v1h-3zM775 179h3v1h-3zM22 189h3v1h-3zM775 189h3v1h-3zM22 199h3v1h-3zM775 199h3v1h-3zM22 209h3v1h-3zM775 209h3v1h-3zM22 219h6v1h-6zM772 219h6v1h-6zM22 229h3v1h-3zM775 229h3v1h-3zM22 239h3v1h-3zM775 239h3v1h-3zM22 249h3v1h-3zM775 249h3v1h-3zM22 259h3v1h-3zM775 259h3v1h-3zM22 269h6v1h-6zM772 269h6v1h-6zM22 279h3v1h-3zM775 279h3v1h-3zM22 289h3v1h-3zM775 289h3v1h-3zM22 299h3v1h-3zM775 299h3v1h-3zM22 309h3v1h-3zM775 309h3v1h-3zM22 319h6v1h-6zM772 319h6v1h-6zM22 329h3v1h-3zM775 329h3v1h-3zM22 339h3v1h-3zM775 339h3v1h-3zM22 349h3v1h-3zM775 349h3v1h-3zM22 359h3v1h-3zM775 359h3v1h-3zM22 369h6v1h-6zM772 369h6v1h-6zM22 379h3v1h-3zM775 379h3v1h-3zM22 389h3v1h-3zM775 389h3v1h-3zM22 399h3v1h-3zM775 399h3v1h-3zM22 409h3v1h-3zM775 409h3v1h-3zM22 419h6v1h-6zM772 419h6v1h-6zM22 429h3v1h-3zM775 429h3v1h-3zM22 439h3v1h-3zM775 439h3v1h-3zM22 449h3v1h-3zM775 449h3v1h-3zM22 459h3v1h-3zM775 459h3v1h-3zM22 469h6v1h-6zM772 469h6v1h-6zM22 479h3v1h-3zM775 479h3v1h-3zM22 489h3v1h-3zM775 489h3v1h-3zM22 499h3v1h-3zM775 499h3v1h-3zM22 509h3v1h-3zM775 509h3v1h-3zM146 269h11v1h-11zM151 264h1v11h-1zM646 269h11v1h-11zM651 264h1v11h-1z" fill="#c8c8c8" shape-rendering="crispEdges"/>
<path d="M394.5 20.5H407.5V32L401 35.2L394.5 32Z" stroke="#9030d0" stroke-width="1.3" fill="#000"/><path d="M397 24.5H405M401 24.5V31" stroke="#a040e0" stroke-width="1.6" fill="none"/><path d="M781 269L793.5 264V274.5Z" fill="#b020e0"/><path d="M0.5 260.8H14.5L19 269.5L14.5 278.3H0.5Z" fill="#100000" stroke="#b82828" stroke-width="1.1"/><path d="M5 267.8L8 264.8V276" stroke="#ff2424" stroke-width="2" fill="none"/>
<rect x="0" y="519" width="319" height="81" fill="#4a9cd0"/><rect x="0" y="559" width="319" height="2" fill="#62a8b8"/><rect x="0" y="539" width="210" height="1" fill="#3a90a8"/><rect x="0" y="597" width="319" height="3" fill="#62a8b8"/><rect x="0" y="519" width="1" height="81" fill="#62a8b8"/><rect x="0" y="519" width="319" height="1" fill="#1a88d8"/><rect x="317" y="519" width="2" height="81" fill="#62a8b8"/><rect x="319" y="519" width="481" height="19" fill="#0a86e8"/><rect x="319" y="538" width="481" height="60" fill="#0462a4"/><rect x="319" y="596" width="481" height="3" fill="#045aa4"/><rect x="319" y="599" width="481" height="1" fill="#1a80d0"/><rect x="1" y="520" width="208" height="19" rx="4" fill="#000"/><rect x="1" y="540" width="208" height="19" rx="4" fill="#000"/><rect x="211" y="520" width="106" height="39" rx="5" fill="#000"/><rect x="1" y="561" width="316" height="36" rx="4" fill="#000"/><circle cx="10.5" cy="530" r="7.7" fill="#f80c0c"/><path d="M8.2 527.8L10.5 525.4V534.6" stroke="#1a0000" stroke-width="1.5" fill="none"/><g fill="#da2228" stroke="#da2228" stroke-width="0.05" font-size="15.5" font-family="Liberation Serif" ><text x="19.00" y="536" textLength="7.00" lengthAdjust="spacingAndGlyphs">5</text><text x="28.00" y="536" textLength="9.00" lengthAdjust="spacingAndGlyphs">V</text><text x="38.31" y="536" textLength="8.39" lengthAdjust="spacingAndGlyphs">~</text></g><g fill="#da2228" stroke="#da2228" stroke-width="0.05" font-size="15.5" font-family="Liberation Serif" ><text x="106.50" y="536" textLength="7.00" lengthAdjust="spacingAndGlyphs">0</text><text x="118.06" y="536">.</text><text x="126.50" y="536" textLength="7.00" lengthAdjust="spacingAndGlyphs">0</text><text x="136.50" y="536" textLength="7.00" lengthAdjust="spacingAndGlyphs">0</text><text x="146.00" y="536" textLength="8.00" lengthAdjust="spacingAndGlyphs">d</text><text x="156.80" y="536" textLength="6.40" lengthAdjust="spacingAndGlyphs">i</text><text x="166.00" y="536" textLength="8.00" lengthAdjust="spacingAndGlyphs">v</text></g><circle cx="10.5" cy="549.7" r="7.9" fill="#e4e41a"/><text x="10.5" y="554.3000000000001" fill="#000" stroke="#000" stroke-width="0.5" font-size="13" font-family="Liberation Sans" text-anchor="middle">2</text><g fill="#e0e070" stroke="#e0e070" stroke-width="0.05" font-size="15.5" font-family="Liberation Serif" ><text x="19.00" y="555" textLength="7.00" lengthAdjust="spacingAndGlyphs">5</text><text x="29.00" y="555" textLength="7.00" lengthAdjust="spacingAndGlyphs">0</text><text x="40.56" y="555">.</text><text x="49.00" y="555" textLength="7.00" lengthAdjust="spacingAndGlyphs">0</text><text x="58.00" y="555" textLength="9.00" lengthAdjust="spacingAndGlyphs">m</text><text x="68.00" y="555" textLength="9.00" lengthAdjust="spacingAndGlyphs">V</text><text x="78.31" y="555" textLength="8.39" lengthAdjust="spacingAndGlyphs">~</text></g><g fill="#e0e070" stroke="#e0e070" stroke-width="0.05" font-size="15.5" font-family="Liberation Serif" ><text x="106.50" y="555" textLength="7.00" lengthAdjust="spacingAndGlyphs">0</text><text x="118.06" y="555">.</text><text x="126.50" y="555" textLength="7.00" lengthAdjust="spacingAndGlyphs">0</text><text x="136.50" y="555" textLength="7.00" lengthAdjust="spacingAndGlyphs">0</text><text x="146.00" y="555" textLength="8.00" lengthAdjust="spacingAndGlyphs">d</text><text x="156.80" y="555" textLength="6.40" lengthAdjust="spacingAndGlyphs">i</text><text x="166.00" y="555" textLength="8.00" lengthAdjust="spacingAndGlyphs">v</text></g><g fill="#e8e8e8" stroke="#e8e8e8" stroke-width="0.05" font-size="15.5" font-family="Liberation Serif" ><text x="220.00" y="534.3" textLength="8.00" lengthAdjust="spacingAndGlyphs">(</text><text x="230.50" y="534.3" textLength="7.00" lengthAdjust="spacingAndGlyphs">2</text><text x="242.06" y="534.3">.</text><text x="250.50" y="534.3" textLength="7.00" lengthAdjust="spacingAndGlyphs">5</text><text x="259.50" y="534.3" textLength="9.00" lengthAdjust="spacingAndGlyphs">M</text><text x="269.69" y="534.3" textLength="8.62" lengthAdjust="spacingAndGlyphs">S</text><text x="280.00" y="534.3" textLength="8.00" lengthAdjust="spacingAndGlyphs">/</text><text x="290.00" y="534.3" textLength="8.00" lengthAdjust="spacingAndGlyphs">s</text><text x="300.00" y="534.3" textLength="8.00" lengthAdjust="spacingAndGlyphs">)</text></g><g fill="#e8e8e8" stroke="#e8e8e8" stroke-width="0.05" font-size="15.5" font-family="Liberation Serif" ><text x="218.50" y="554.1" textLength="9.00" lengthAdjust="spacingAndGlyphs">D</text><text x="229.00" y="554.1" textLength="8.00" lengthAdjust="spacingAndGlyphs">e</text><text x="239.00" y="554.1" textLength="8.00" lengthAdjust="spacingAndGlyphs">p</text><text x="249.80" y="554.1" textLength="6.40" lengthAdjust="spacingAndGlyphs">t</text><text x="259.00" y="554.1" textLength="8.00" lengthAdjust="spacingAndGlyphs">h</text><text x="270.85" y="554.1">:</text><text x="279.12" y="554.1" textLength="7.75" lengthAdjust="spacingAndGlyphs">1</text><text x="289.50" y="554.1" textLength="7.00" lengthAdjust="spacingAndGlyphs">0</text><text x="298.50" y="554.1" textLength="9.00" lengthAdjust="spacingAndGlyphs">K</text></g><circle cx="9.5" cy="570" r="7.9" fill="#f80c0c"/><path d="M7.2 567.8L9.5 565.4V574.6" stroke="#1a0000" stroke-width="1.5" fill="none"/><g fill="#da2228" stroke="#da2228" stroke-width="0.05" font-size="15.5" font-family="Liberation Serif" ><text x="20.69" y="575" textLength="8.62" lengthAdjust="spacingAndGlyphs">F</text><text x="32.85" y="575">:</text><text x="41.12" y="575" textLength="7.75" lengthAdjust="spacingAndGlyphs">1</text><text x="53.06" y="575">.</text><text x="61.50" y="575" textLength="7.00" lengthAdjust="spacingAndGlyphs">0</text><text x="71.50" y="575" textLength="7.00" lengthAdjust="spacingAndGlyphs">0</text><text x="81.50" y="575" textLength="7.00" lengthAdjust="spacingAndGlyphs">0</text><text x="90.50" y="575" textLength="9.00" lengthAdjust="spacingAndGlyphs">K</text><text x="100.50" y="575" textLength="9.00" lengthAdjust="spacingAndGlyphs">H</text><text x="111.00" y="575" textLength="8.00" lengthAdjust="spacingAndGlyphs">z</text></g><circle cx="9.5" cy="589" r="7.9" fill="#f80c0c"/><path d="M7.2 586.8L9.5 584.4V593.6" stroke="#1a0000" stroke-width="1.5" fill="none"/><g fill="#da2228" stroke="#da2228" stroke-width="0.05" font-size="15.5" font-family="Liberation Serif" ><text x="20.50" y="594" textLength="9.00" lengthAdjust="spacingAndGlyphs">V</text><text x="31.00" y="594" textLength="8.00" lengthAdjust="spacingAndGlyphs">p</text><text x="42.85" y="594">:</text><text x="51.12" y="594" textLength="7.75" lengthAdjust="spacingAndGlyphs">1</text><text x="61.50" y="594" textLength="7.00" lengthAdjust="spacingAndGlyphs">9</text><text x="73.06" y="594">.</text><text x="81.50" y="594" textLength="7.00" lengthAdjust="spacingAndGlyphs">4</text><text x="91.50" y="594" textLength="7.00" lengthAdjust="spacingAndGlyphs">0</text><text x="101.00" y="594" textLength="8.00" lengthAdjust="spacingAndGlyphs">v</text></g><circle cx="168.8" cy="570" r="7.9" fill="#f80c0c"/><path d="M166.5 567.8L168.8 565.4V574.6" stroke="#1a0000" stroke-width="1.5" fill="none"/><g fill="#da2228" stroke="#da2228" stroke-width="0.05" font-size="15.5" font-family="Liberation Serif" ><text x="180.50" y="575" textLength="9.00" lengthAdjust="spacingAndGlyphs">V</text><text x="191.00" y="575" textLength="8.00" lengthAdjust="spacingAndGlyphs">k</text><text x="202.85" y="575">:</text><text x="211.50" y="575" textLength="7.00" lengthAdjust="spacingAndGlyphs">9</text><text x="223.06" y="575">.</text><text x="231.50" y="575" textLength="7.00" lengthAdjust="spacingAndGlyphs">4</text><text x="241.50" y="575" textLength="7.00" lengthAdjust="spacingAndGlyphs">5</text><text x="251.50" y="575" textLength="7.00" lengthAdjust="spacingAndGlyphs">0</text><text x="261.00" y="575" textLength="8.00" lengthAdjust="spacingAndGlyphs">v</text></g><circle cx="168.8" cy="589" r="7.9" fill="#f80c0c"/><path d="M166.5 586.8L168.8 584.4V593.6" stroke="#1a0000" stroke-width="1.5" fill="none"/><g fill="#da2228" stroke="#da2228" stroke-width="0.05" font-size="15.5" font-family="Liberation Serif" ><text x="180.50" y="594" textLength="9.00" lengthAdjust="spacingAndGlyphs">V</text><text x="192.85" y="594">:</text><text x="201.12" y="594" textLength="7.75" lengthAdjust="spacingAndGlyphs">1</text><text x="211.50" y="594" textLength="7.00" lengthAdjust="spacingAndGlyphs">4</text><text x="221.50" y="594" textLength="7.00" lengthAdjust="spacingAndGlyphs">5</text><text x="233.06" y="594">.</text><text x="241.50" y="594" textLength="7.00" lengthAdjust="spacingAndGlyphs">2</text><text x="250.50" y="594" textLength="9.00" lengthAdjust="spacingAndGlyphs">m</text><text x="261.00" y="594" textLength="8.00" lengthAdjust="spacingAndGlyphs">v</text></g><rect x="320" y="520" width="98" height="18" rx="9" fill="#000"/><g fill="#e8e8e8" stroke="#e8e8e8" stroke-width="0.05" font-size="15.5" font-family="Liberation Serif" ><text x="333.50" y="534.8" textLength="9.00" lengthAdjust="spacingAndGlyphs">M</text><text x="345.85" y="534.8">:</text><text x="354.50" y="534.8" textLength="7.00" lengthAdjust="spacingAndGlyphs">2</text><text x="364.50" y="534.8" textLength="7.00" lengthAdjust="spacingAndGlyphs">0</text><text x="374.50" y="534.8" textLength="7.00" lengthAdjust="spacingAndGlyphs">0</text><text x="384.00" y="534.8" textLength="8.00" lengthAdjust="spacingAndGlyphs">u</text><text x="394.00" y="534.8" textLength="8.00" lengthAdjust="spacingAndGlyphs">s</text></g><rect x="665" y="520" width="129" height="18" rx="9" fill="#000"/><circle cx="675.5" cy="529" r="7.6" fill="#f80c0c"/><path d="M673.2 526.8L675.5 524.4V533.6" stroke="#1a0000" stroke-width="1.5" fill="none"/><path d="M685 535.5H694L697.5 523.5H704" stroke="#e8e8e8" stroke-width="1.3" fill="none"/><g fill="#e8e8e8" stroke="#e8e8e8" stroke-width="0.05" font-size="15.5" font-family="Liberation Serif" ><text x="707.50" y="535.2" textLength="7.00" lengthAdjust="spacingAndGlyphs">4</text><text x="717.50" y="535.2" textLength="7.00" lengthAdjust="spacingAndGlyphs">4</text><text x="729.06" y="535.2">.</text><text x="737.50" y="535.2" textLength="7.00" lengthAdjust="spacingAndGlyphs">0</text><text x="746.50" y="535.2" textLength="9.00" lengthAdjust="spacingAndGlyphs">m</text><text x="756.50" y="535.2" textLength="9.00" lengthAdjust="spacingAndGlyphs">V</text></g><rect x="322" y="541" width="90" height="55" fill="#0a4c9c"/><rect x="323" y="542" width="88" height="52" rx="2" fill="#5ab0f4"/><rect x="324" y="543" width="87" height="51" fill="#0a80e0"/><rect x="410" y="543" width="1" height="51" fill="#0a6cc4"/><g fill="#0a1a6a" stroke="#0a1a6a" stroke-width="0.05" font-size="15.5" font-family="Liberation Serif" ><text x="346.50" y="562" textLength="9.00" lengthAdjust="spacingAndGlyphs">T</text><text x="357.80" y="562" textLength="6.40" lengthAdjust="spacingAndGlyphs">i</text><text x="367.00" y="562" textLength="8.00" lengthAdjust="spacingAndGlyphs">p</text><text x="377.00" y="562" textLength="8.00" lengthAdjust="spacingAndGlyphs">o</text></g><rect x="336" y="571" width="60" height="20" fill="#e4e0dc"/><g fill="#000" stroke="#000" stroke-width="0.05" font-size="15.5" font-family="Liberation Serif" ><text x="338.80" y="586" textLength="6.40" lengthAdjust="spacingAndGlyphs">I</text><text x="347.50" y="586" textLength="9.00" lengthAdjust="spacingAndGlyphs">m</text><text x="358.00" y="586" textLength="8.00" lengthAdjust="spacingAndGlyphs">a</text><text x="368.00" y="586" textLength="8.00" lengthAdjust="spacingAndGlyphs">g</text><text x="378.00" y="586" textLength="8.00" lengthAdjust="spacingAndGlyphs">e</text><text x="388.00" y="586" textLength="8.00" lengthAdjust="spacingAndGlyphs">n</text></g><rect x="597" y="540" width="90" height="56" fill="#0a4c9c"/><rect x="598" y="541" width="88" height="53" rx="2" fill="#5ab0f4"/><rect x="599" y="542" width="87" height="52" fill="#0a80e0"/><rect x="685" y="542" width="1" height="52" fill="#0a6cc4"/><g fill="#0a1450" stroke="#0a1450" stroke-width="0.05" font-size="15.5" font-family="Liberation Serif" ><text x="606.50" y="574" textLength="9.00" lengthAdjust="spacingAndGlyphs">G</text><text x="617.00" y="574" textLength="8.00" lengthAdjust="spacingAndGlyphs">u</text><text x="627.00" y="574" textLength="8.00" lengthAdjust="spacingAndGlyphs">a</text><text x="637.00" y="574" textLength="8.00" lengthAdjust="spacingAndGlyphs">r</text><text x="647.00" y="574" textLength="8.00" lengthAdjust="spacingAndGlyphs">d</text><text x="657.00" y="574" textLength="8.00" lengthAdjust="spacingAndGlyphs">a</text><text x="667.00" y="574" textLength="8.00" lengthAdjust="spacingAndGlyphs">r</text></g>
</svg>
</body></html>
